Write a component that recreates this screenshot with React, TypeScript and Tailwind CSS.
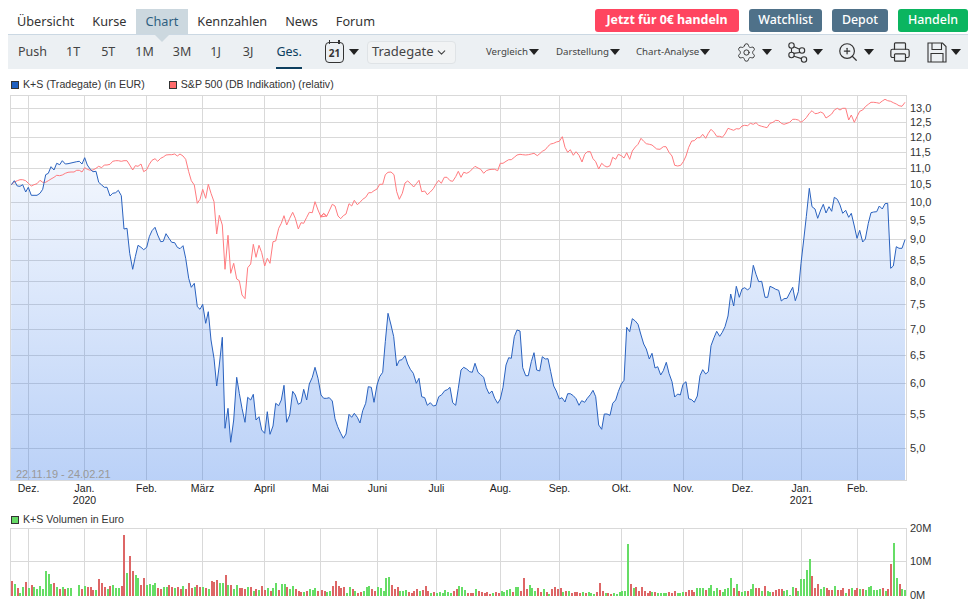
import { ChevronDown, Printer, Settings, ZoomIn } from 'lucide-react';

const NAV = ['Übersicht', 'Kurse', 'Chart', 'Kennzahlen', 'News', 'Forum'];

const RANGES = [
  { label: 'Push', ml: 'ml-[10px]' },
  { label: '1T', ml: 'ml-[19px]' },
  { label: '5T', ml: 'ml-[21px]' },
  { label: '1M', ml: 'ml-[20px]' },
  { label: '3M', ml: 'ml-[19px]' },
  { label: '1J', ml: 'ml-[19px]' },
  { label: '3J', ml: 'ml-[22px]' },
];

// traced from the picture at 3x: [x, y, x, y, ...] relative to a crop origin
const crop = (ox: number, oy: number, pts: number[]) => {
  const out: string[] = [];
  for (let i = 0; i < pts.length; i += 2) {
    out.push(`${(ox + pts[i] / 3).toFixed(1)},${(oy + pts[i + 1] / 3).toFixed(1)}`);
  }
  return out;
};

const BLUE = [
  ...crop(0, 90, [34,284,43,272,52,288,60,289,68,284,77,306,85,292,94,316,102,316,111,316,120,310,128,298,137,254,145,250,153,230,162,240,170,220,179,224,187,212,196,222,204,221,213,219,222,217,230,215,238,214,246,222,254,203,262,225,271,238,279,245,288,244,296,277,305,285,313,292,321,292,330,318,338,310,347,308,355,301,364,317,372,417,381,415,389,490,398,538,406,500,414,466,423,472,431,479,440,472,448,440,456,422,465,412,473,435,482,455,490,454,498,431,507,445,515,457,524,458,532,472,540,476,549,467,557,505,566,565,574,592,583,580]),
  ...crop(0, 290, [592,50,600,58,608,43,617,100,625,65,633,150,642,205,650,288,658,225,667,142,675,415,684,355,692,457,701,390,710,262,718,310,726,355,735,397,743,322,752,330,760,313,768,390,777,380,785,420,794,430,802,365,810,433,819,408,827,340,836,347,844,330,852,286,860,397,869,375,878,304,886,315,895,343,903,338,911,298,920,330,928,282,937,262,945,232,954,265,963,315,971,325,980,325,988,323]),
  ...crop(320, 300, [37,303,45,356,53,380,62,400,70,415,78,402,87,343,95,352,103,340,112,352,120,369,128,332,137,310,145,260,154,262,162,307,171,255,179,230,188,217,196,125,204,40,213,75,221,110,230,198,238,181,246,179,255,167,263,192,271,208,280,220,289,250,297,235,305,290,314,293,322,316,331,308,340,318,348,316,356,290,365,284,374,272,382,269,390,262,398,308,407,316,415,265,423,210,431,202,440,207,449,215,457,217,465,190,474,217,482,224,491,232,499,263,507,281,516,273,524,295,533,310,541,297,549,262,558,195,566,173,574,175,583,110,591,90,600,93,608,203,617,227,625,227,634,185,642,158,650,210,659,213,667,170,676,177,684,176,692,215,701,258,709,273,718,297,726,293,735,306,743,281,751,281,760,287,768,296,777,316,785,302,794,307,802,295,811,284,819,271,827,290,836,375,845,388,853,342,861,342,870,346,878,310,887,300,895,275,904,252,912,241,920,82,929,95,937,56,946,63,954,73,963,105,971,132,979,147,988,177]),
  ...crop(640, 300, [36,160,45,204,53,200,62,225,70,212,79,187,87,220,96,245,104,291,113,282,121,285,129,253,138,245,146,296,155,299,163,307,172,288,180,227,188,209,197,222,205,215,213,137,222,113,230,94,239,109,247,97,255,80,264,48]),
  ...crop(640, 90, [272,612,281,648,289,589,298,622,306,597,314,593,323,600,331,592,340,526,348,553,356,575,365,574,375,622,383,622,390,589,399,593,407,598,416,601,424,633,432,626,441,625,449,609,458,592,466,632,475,605,483,520,491,450,499,380,508,295,516,350,525,357,533,385,542,360,550,343,558,369,567,350,575,364,583,322,592,328,600,345,608,370,617,361,626,382,634,370,643,408,651,445,659,421,668,456,676,447,685,400,693,368,701,366,710,365,718,348,727,357,735,341,743,340,752,535,760,528,769,470,777,475,786,475,795,449]),
];

const RED = [
  ...crop(0, 90, [34,284,43,276,52,272,60,269,68,269,77,272,85,280,94,288,102,284,111,281,120,271,128,277,137,277,145,272,153,267,162,262,170,256,179,257,187,255,196,250,204,247,213,246,222,246,230,241,238,241,246,246,254,233,262,238,271,241,279,240,288,235,296,229,305,233,313,225,321,225,330,223,338,214,347,212,355,212,364,214,372,212,381,212,389,225,398,240,406,227,414,229,423,222,431,245,440,239,448,223,456,211,465,206,473,214,482,205,490,201,498,195,507,194,515,194,524,192,532,198,540,192,549,198,557,208,566,245,574,272,583,285,592,340,600,328,608,298,617,325,625,283,633,310,642,335,650,432,658,376,667,405,675,538,684,436,692,550,701,520,710,567,718,572,726,615,735,626,743,533,752,522,760,463,768,502,777,466,785,488,794,528,802,505,810,520,819,455,827,453,836,415,844,400,852,377,860,405,869,385,878,367,886,385,895,417,903,398,911,400,920,382,928,367,937,368,945,335,954,360,963,381,971,370,980,378]),
  ...crop(320, 100, [0,351,10,341,20,349,37,313,45,318,54,348,62,356,70,347,78,342,87,311,95,318,103,301,112,314,120,307,128,298,137,292,146,278,154,278,162,272,171,267,179,253,188,253,196,224,204,217,213,216,222,224,230,275,238,298,247,280,255,249,263,243,272,251,281,261,289,251,297,241,305,275,314,273,322,284,331,276,340,266,348,252,356,241,364,250,373,232,381,232,390,242,398,244,407,230,415,214,423,232,431,217,440,220,449,215,457,207,465,199,474,204,482,208,491,220,499,212,507,209,516,208,524,208,533,212,541,190,549,190,558,184,566,179,574,179,583,172,591,165,600,163,608,164,617,165,625,164,634,162,642,160,652,167,659,161,667,154,676,149,684,139,692,132,701,130,709,126,718,124,727,110,735,142,743,157,751,149,760,166,768,155,777,166,786,186,794,163,802,155,811,155,819,176,827,185,836,207,845,190,853,197,861,201,870,197,878,172,887,178,895,163,904,167,912,174,920,158,929,178,937,153,946,141,954,133,963,115,971,124,979,131,988,133]),
  ...crop(640, 90, [36,165,50,177,60,178,70,170,78,170,87,187,96,198,104,226,113,228,122,226,130,215,138,198,146,172,155,153,163,152,172,143,180,143,188,133,197,145,205,130,213,118,222,127,230,139,239,139,247,142,255,132,264,115,272,118,281,121,289,116,298,117,306,108,314,106,323,107,331,100,340,103,348,98,356,106,365,109,373,111,381,113,390,100,399,97,407,91,416,92,424,100,432,103,441,100,449,97,458,88,466,88,475,90,483,97,491,91,499,83,508,70,516,62,525,71,533,70,542,66,550,70,558,84,567,78,575,72,583,60,592,55,600,60,608,55,617,55,626,90,634,75,643,97,651,80,659,64,668,60,676,50,685,43,693,37,701,37,710,38,718,40,727,33,735,28,743,32,752,34,760,38,769,42,777,47,786,49,795,37]),
];

const H_LINES = [108, 122, 137, 152, 168, 184, 202, 220, 239, 260, 281, 304, 329, 355, 383, 414, 448];
const V_LINES = [28, 84, 146, 202, 264, 320, 377, 436, 500, 559, 621, 683, 742, 801, 857];

const Y_LABELS = [
  ['13,0', 108], ['12,5', 122], ['12,0', 137], ['11,5', 152], ['11,0', 168], ['10,5', 184],
  ['10,0', 202], ['9,5', 220], ['9,0', 239], ['8,5', 260], ['8,0', 281], ['7,5', 304],
  ['7,0', 329], ['6,5', 355], ['6,0', 383], ['5,5', 414], ['5,0', 448],
] as const;

const MONTHS = [
  ['Dez.', 28], ['Jan.', 84], ['Feb.', 146], ['März', 202], ['April', 264], ['Mai', 320], ['Juni', 377],
  ['Juli', 436], ['Aug.', 500], ['Sep.', 559], ['Okt.', 621], ['Nov.', 683], ['Dez.', 742], ['Jan.', 801], ['Feb.', 857],
] as const;

// bar heights at 3x, negative = red, starts at the crop's left edge
const VOL_A = [-44,35,-23,10,27,-41,23,-33,27,21,29,20,74,65,35,-38,26,-21,28,-21,23,23,1,1,32,-20,29,-27,-27,-18,18,-50,-38,-27,21,-30,33,23,23,-29,-182,70,-119,-74,62,53,-33,-53,33,35,33,38,-23,-21,27,27,-32,-27,23,-27,-21,30,-21,-38,-23,27,-32,-27,27,-24,21,-44,-41,-47,38,38,-62,33,-33,20,33,-24,-24,-21,26,-27,14,-21,18,-30,-18,24,-14,23,38,-18,36,36,-27,21,30,-20,-15,-12,12,-14,21,17,24,-14];
const VOL_B = [-17,-15,12,15,-29,-44,-29,-24,-26,8,26,-21,14,-8,-11,14,26,29,-21,-15,26,23,14,53,56,-32,-21,-27,14,14,17,-12,-9,-14,-21,14,-18,-29,-14,9,-11,8,11,8,18,12,9,-14,-21,29,26,18,-8,-8,-8,20,-14,-11,-9,-11,-6,8,-11,-8,14,12,18,21,-11,26,26,-14,-53,-21,32,24,14,-23,-11,21,-11,6,-21,-26,-21,-23,11,-14,14,-9,-11,-11,-9,11,-9,11,8,6,-11,-38,-14,8,-8,-6,8,5,11,14,14,155,-35,23,-26,-14,-26,-14,-8];
const VOL_C = [-14,11,-12,8,8,8,8,-11,-8,-14,9,8,11,-11,-18,-18,-12,23,23,23,-18,23,32,15,23,-17,11,20,24,53,-24,35,-15,12,14,-14,20,35,-23,-23,14,-29,14,11,-11,-18,-20,-20,14,17,2,26,-23,14,50,50,77,112,-59,-23,-35,20,26,-23,-17,-17,29,-17,-17,-23,8,-20,23,-17,-23,20,-20,17,26,29,17,17,20,-23,14,-20,-95,160,53,-35,20,17];

const bars = (start: number, list: number[]) =>
  list.map((v, i) => ({ x: Math.round(start + i * 2.81), h: Math.abs(v) / 3, red: v < 0 }));

const VOLUME = [...bars(11, VOL_A), ...bars(320.7, VOL_B), ...bars(648.5, VOL_C)];

function Caret({ className = '' }: { className?: string }) {
  return <span className={`inline-block h-0 w-0 border-x-[5px] border-t-[6px] border-x-transparent border-t-[#222] ${className}`} />;
}

function CalendarIcon() {
  return (
    <span className="relative flex h-[21px] w-[19px] items-center justify-center rounded-[4px] border-[1.5px] border-[#333] text-[10px] font-bold text-[#333]">
      <span className="absolute -top-[3px] left-[3px] h-[4px] w-[1.5px] bg-[#333]" />
      <span className="absolute -top-[3px] right-[3px] h-[4px] w-[1.5px] bg-[#333]" />
      <span className="mt-[2px] leading-none">21</span>
    </span>
  );
}

function MoleculeIcon() {
  return (
    <svg width="20" height="21" viewBox="0 0 20 21" fill="none" stroke="#333" strokeWidth="1.1">
      <circle cx="3.5" cy="3.5" r="2.7" />
      <circle cx="14" cy="8.5" r="2.7" />
      <circle cx="3.5" cy="13" r="2.7" />
      <circle cx="16" cy="17.5" r="2.7" />
      <path d="M3.5 6.2V10.3M6 4.7L11.6 7.3M12 10.5L5.6 11.4M6 14.3L13.6 16.6" />
    </svg>
  );
}

function SaveIcon() {
  return (
    <svg width="20" height="21" viewBox="0 0 20 21" fill="none" stroke="#333" strokeWidth="1.1">
      <path d="M1 1H15.5L19 4.5V20H1Z" />
      <path d="M5 1V7.5H14.5V1M4 20V11.5H16V20" />
    </svg>
  );
}

function ChartLegend({ color, label }: { color: string; label: string }) {
  return (
    <span className="flex items-center gap-[4px]">
      <span className={`h-[8px] w-[8px] border border-[#333] ${color}`} />
      {label}
    </span>
  );
}

export default function App() {
  const area = `11,480 ${BLUE.join(' ')} 905,480`;

  return (
    <div className="h-[604px] w-[977px] overflow-hidden bg-white font-['Noto_Sans','Open_Sans',sans-serif] text-[#333]">
      <div className="ml-[8px] flex h-[35px] w-[960px] items-end border-b border-[#cbd8e3]">
        <nav className="flex h-[25px] text-[12.7px]">
          {NAV.map((item) => (
            <span
              key={item}
              className={`relative flex items-center ${item === 'Chart' ? 'bg-[#ccd8df] px-[10px] text-[#2f5f7f]' : 'px-[9px]'}`}
            >
              {item}
              {item === 'Chart' && (
                <span className="absolute left-1/2 top-full z-10 h-0 w-0 -translate-x-1/2 border-x-[8px] border-t-[8px] border-x-transparent border-t-[#ccd8df]" />
              )}
            </span>
          ))}
        </nav>
        <div className="ml-auto mb-[2px] flex h-[23px] gap-[10px] text-[12.4px] font-medium text-white">
          <span className="flex w-[144px] items-center justify-center rounded-[3px] bg-[#ff4560] font-bold">Jetzt für 0€ handeln</span>
          <span className="flex w-[73px] items-center justify-center rounded-[3px] bg-[#4f7189]">Watchlist</span>
          <span className="flex w-[56px] items-center justify-center rounded-[3px] bg-[#4f7189]">Depot</span>
          <span className="flex w-[70px] items-center justify-center rounded-[3px] bg-[#0bb560]">Handeln</span>
        </div>
      </div>

      <div className="ml-[8px] flex h-[34px] w-[960px] items-center bg-[#ecf0f3] text-[12.5px] text-[#444]">
        {RANGES.map((range) => (
          <span key={range.label} className={range.ml}>{range.label}</span>
        ))}
        <span className="relative ml-[23px] flex h-full items-center text-[#0d4060]">
          Ges.
          <span className="absolute bottom-0 left-0 h-[2px] w-full bg-[#0d3f5f]" />
        </span>
        <span className="ml-[23px]"><CalendarIcon /></span>
        <Caret className="ml-[5px]" />
        <span className="ml-[8px] flex h-[23px] w-[89px] items-center justify-between rounded-[4px] border border-[#dfe3e6] bg-[#f1f3f4] pl-[4px] pr-[7px] text-[13px]">
          Tradegate
          <ChevronDown size={13} strokeWidth={2} />
        </span>
        <span className="ml-[30px] flex items-center gap-[1px] text-[9.7px]">Vergleich<Caret /></span>
        <span className="ml-[17px] flex items-center gap-[1px] text-[9.7px]">Darstellung<Caret /></span>
        <span className="ml-[16px] flex items-center gap-[1px] text-[9.7px]">Chart-Analyse<Caret /></span>
        <Settings className="ml-[26px]" size={21} strokeWidth={1.1} color="#333" />
        <Caret className="ml-[5px]" />
        <span className="ml-[16px]"><MoleculeIcon /></span>
        <Caret className="ml-[5px]" />
        <ZoomIn className="ml-[14px]" size={22} strokeWidth={1.3} color="#333" />
        <Caret className="ml-[5px]" />
        <Printer className="ml-[15px]" size={22} strokeWidth={1.3} color="#333" />
        <span className="ml-[16px]"><SaveIcon /></span>
        <Caret className="ml-[4px]" />
      </div>

      <div className="ml-[11px] flex h-[26px] items-center gap-[24px] pt-[6px] font-['Liberation_Sans',sans-serif] text-[10.6px]">
        <ChartLegend color="bg-[#1f5fbf]" label="K+S (Tradegate) (in EUR)" />
        <ChartLegend color="bg-[#ff6b6b]" label="S&P 500 (DB Indikation) (relativ)" />
      </div>

      <svg width="977" height="414" viewBox="0 95 977 414" className="block font-['Liberation_Sans',sans-serif]">
        <defs>
          <linearGradient id="area" gradientUnits="userSpaceOnUse" x1="0" y1="95" x2="0" y2="480">
            <stop offset="0" stopColor="#2f74e8" stopOpacity="0" />
            <stop offset="1" stopColor="#2f74e8" stopOpacity="0.33" />
          </linearGradient>
        </defs>
        <g stroke="#d9d9d9" strokeWidth="1" shapeRendering="crispEdges">
          <rect x="10.5" y="95.5" width="895.5" height="385" fill="#fff" />
          {H_LINES.map((y) => <line key={y} x1="11" x2="906" y1={y + 0.5} y2={y + 0.5} />)}
          {V_LINES.map((x) => <line key={x} x1={x + 0.5} x2={x + 0.5} y1="95" y2="480" />)}
        </g>
        <polygon points={area} fill="url(#area)" />
        <polyline points={RED.join(' ')} fill="none" stroke="#ff7b7f" strokeWidth="1" />
        <polyline points={BLUE.join(' ')} fill="none" stroke="#2a62bf" strokeWidth="1" />
        <text x="16" y="478" fontSize="11" fill="#999">22.11.19 - 24.02.21</text>
        <g fontSize="11" fill="#333">
          {Y_LABELS.map(([label, y]) => <text key={label} x="910" y={y + 4}>{label}</text>)}
        </g>
        <g fontSize="10.5" fill="#222" textAnchor="middle">
          {MONTHS.map(([label, x]) => <text key={x} x={x + 0.5} y="492">{label}</text>)}
          <text x="84.5" y="504">2020</text>
          <text x="801.5" y="504">2021</text>
        </g>
      </svg>

      <div className="ml-[11px] mt-[3px] flex h-[15px] items-center font-['Liberation_Sans',sans-serif] text-[10.6px]">
        <ChartLegend color="bg-[#66d966]" label="K+S Volumen in Euro" />
      </div>

      <svg width="977" height="77" viewBox="0 527 977 77" className="block overflow-visible font-['Liberation_Sans',sans-serif]">
        <g stroke="#d9d9d9" strokeWidth="1" shapeRendering="crispEdges">
          <path d="M10.5 596V528.5H906V596M11 561.5H906" fill="none" />
          {V_LINES.map((x) => <line key={x} x1={x + 0.5} x2={x + 0.5} y1="528" y2="596" />)}
        </g>
        <g shapeRendering="crispEdges">
          {VOLUME.map((bar, i) => (
            <rect key={i} x={bar.x} y={596 - bar.h} width="2" height={bar.h} fill={bar.red ? '#dd6666' : '#66dd66'} />
          ))}
        </g>
        <g fontSize="11" fill="#333">
          <text x="910" y="532">20M</text>
          <text x="910" y="565">10M</text>
          <text x="910" y="599">0M</text>
        </g>
      </svg>
    </div>
  );
}
